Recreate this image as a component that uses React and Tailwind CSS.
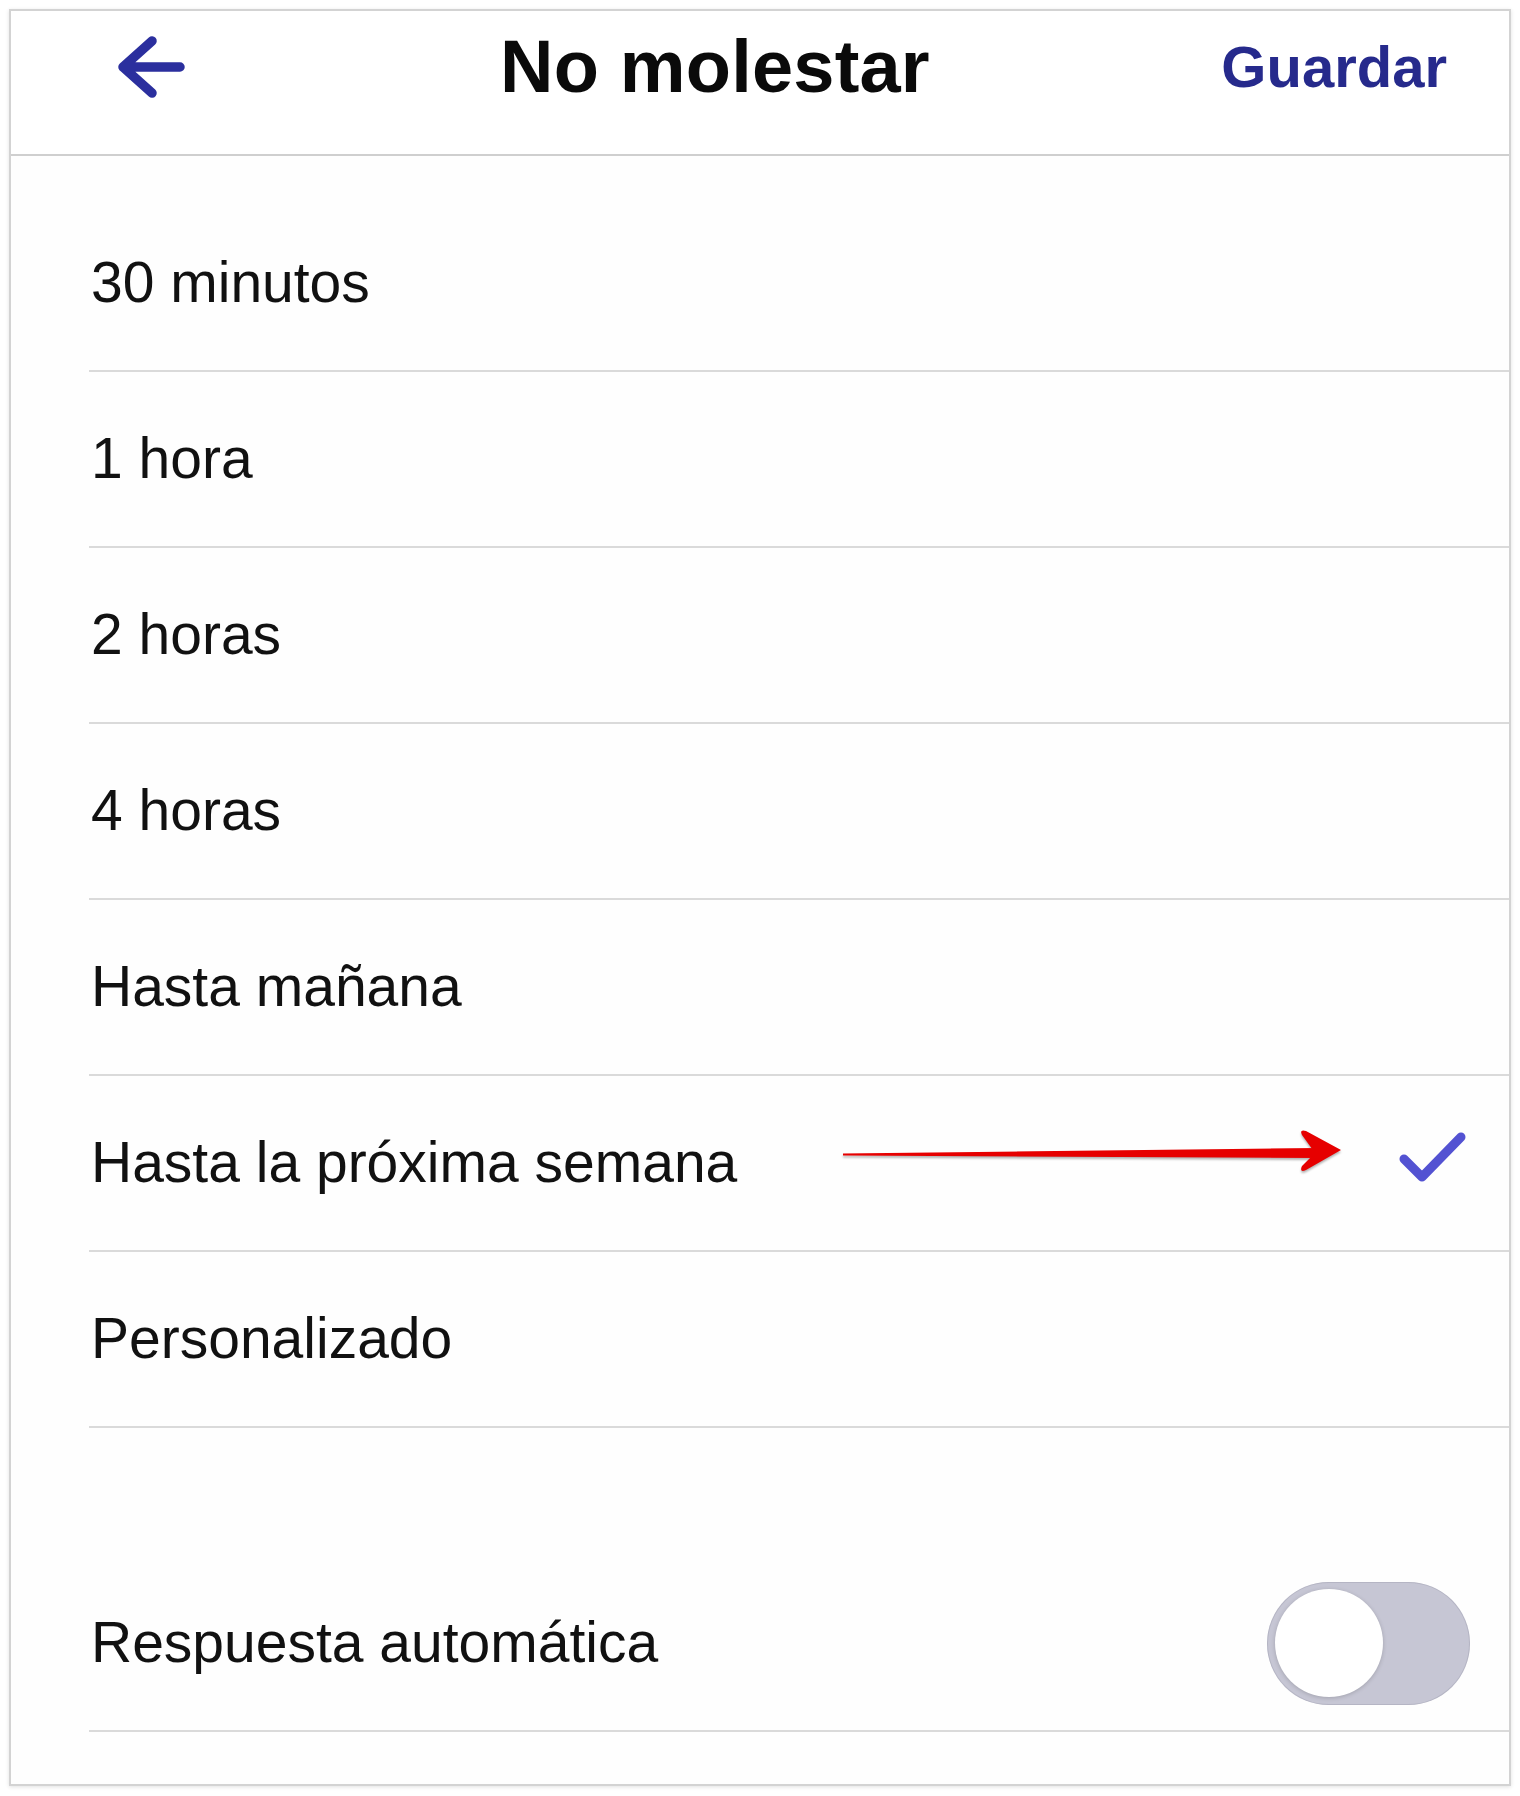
import React from "react";

const rows = [
  "30 minutos",
  "1 hora",
  "2 horas",
  "4 horas",
  "Hasta mañana",
  "Hasta la próxima semana",
  "Personalizado",
];

function BackArrow() {
  return (
    <svg width="78" height="72" viewBox="0 0 78 72" className="ml-[101px] shrink-0">
      <path
        d="M40 10 L11 36 L40 62 M11 36 L68 36"
        fill="none"
        stroke="#2b2f9e"
        strokeWidth="9.5"
        strokeLinecap="round"
        strokeLinejoin="round"
      />
    </svg>
  );
}

function Check() {
  return (
    <svg width="75" height="58" viewBox="0 0 75 58" className="ml-auto mr-[39px] mb-[13px] shrink-0">
      <path
        d="M9 31 L27 49 L66 9"
        fill="none"
        stroke="#5352d2"
        strokeWidth="9"
        strokeLinecap="round"
        strokeLinejoin="round"
      />
    </svg>
  );
}

function RedArrow() {
  return (
    <svg
      width="502"
      height="50"
      viewBox="0 0 502 50"
      className="absolute left-[754px] top-[50px] drop-shadow-[0_2px_1px_rgba(0,0,0,0.3)]"
    >
      <path d="M0 27.5 L474 22 L474 32 L0 29.5 Z" fill="#e60000" />
      <path
        d="M459 9 Q456 3 463 5 L498 24 L463 44 Q456 47 459 40 L472 27 Z"
        fill="#e60000"
      />
    </svg>
  );
}

function Toggle() {
  return (
    <div className="ml-auto mr-[39px] w-[203px] h-[123px] rounded-full bg-[#c6c6d4] shadow-[inset_0_0_0_1px_rgba(150,150,165,0.35)] flex items-center pl-[8px] shrink-0">
      <div className="w-[108px] h-[108px] rounded-full bg-white shadow-[0_1px_4px_rgba(0,0,0,0.18)]" />
    </div>
  );
}

export default function App() {
  return (
    <div className="w-[1520px] h-[1796px] bg-white pt-[9px] font-['Liberation_Sans',Arial,sans-serif]">
      <div className="ml-[9px] w-[1502px] border-2 border-[#d3d3d3] bg-white shadow-[0_1px_4px_rgba(0,0,0,0.12)]">
        <header className="h-[145px] border-b-2 border-[#cfcfcf]">
          <div className="h-[112px] flex items-center">
            <BackArrow />
            <h1 className="ml-[310px] text-[74px] font-bold leading-none text-[#0a0a0a] tracking-[0.2px]">
              No molestar
            </h1>
            <div className="flex-1 text-right pr-[62px] text-[58px] font-bold leading-none text-[#262a8c]">
              Guardar
            </div>
          </div>
        </header>
        <div className="pt-[40px] pb-[52px] bg-[#fefefe]">
          <div className="ml-[78px]">
            {rows.map((r, i) => (
              <div
                key={r}
                className="relative h-[176px] border-b-2 border-[#dadada] flex items-center text-[57px] text-[#111111]"
              >
                <span className="pl-[2px]">{r}</span>
                {i === 5 && (
                  <>
                    <RedArrow />
                    <Check />
                  </>
                )}
              </div>
            ))}
            <div className="mt-[128px] h-[176px] border-b-2 border-[#dadada] flex items-center text-[57px] text-[#111111]">
              <span className="pl-[2px]">Respuesta automática</span>
              <Toggle />
            </div>
          </div>
        </div>
      </div>
    </div>
  );
}
